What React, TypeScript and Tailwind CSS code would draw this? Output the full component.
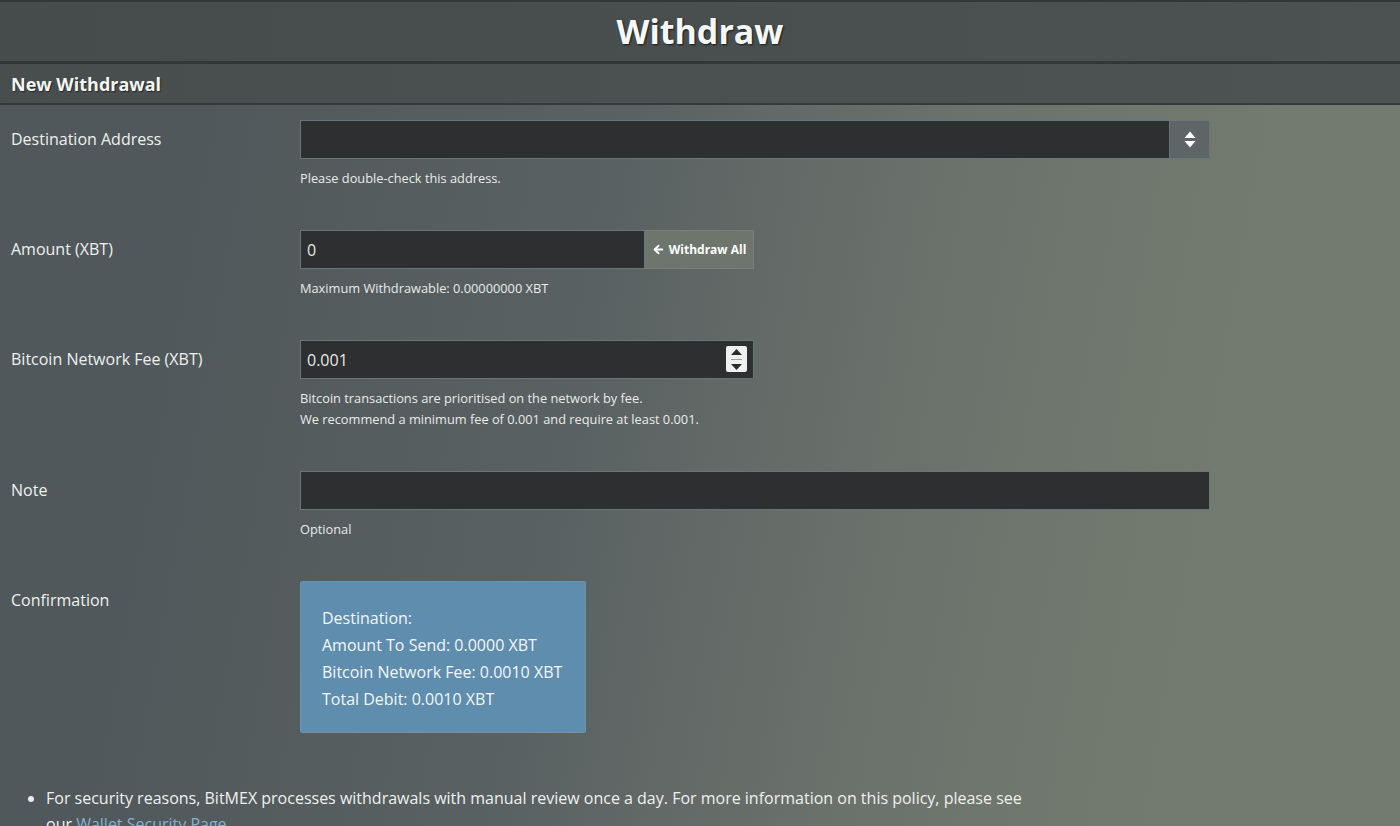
import { ArrowLeft } from 'lucide-react'

function SortIcon() {
  return (
    <svg width="12" height="17" viewBox="0 0 12 17" className="fill-white">
      <path d="M6 0.5 L11.5 7 H0.5 Z" />
      <path d="M6 16.5 L11.5 10 H0.5 Z" />
    </svg>
  )
}

function Spinner() {
  return (
    <div className="absolute right-[6px] top-[5px] flex h-[26px] w-[21px] flex-col items-center justify-center gap-[4px] rounded-[2px] bg-[#eef1ef]">
      <svg width="11" height="6" viewBox="0 0 11 6" className="fill-[#2a2d2d]">
        <path d="M5.5 0 L11 6 H0 Z" />
      </svg>
      <div className="h-px w-[11px] bg-[#9aa09c]" />
      <svg width="11" height="6" viewBox="0 0 11 6" className="fill-[#2a2d2d]">
        <path d="M5.5 6 L11 0 H0 Z" />
      </svg>
    </div>
  )
}

const inputCls =
  'h-[39px] bg-[#2e2f30] border border-[#66777c] text-[16px] text-[#e6e8e6] px-[6px] flex items-center'

function Row({ label, children, gap = true }: { label: string; children: React.ReactNode; gap?: boolean }) {
  return (
    <div className={`flex ${gap ? 'mb-[41px]' : ''}`}>
      <div className="w-[300px] shrink-0 pl-[11px] text-[16px] leading-[39px] text-[#eef0ee]">{label}</div>
      <div className="flex-1">{children}</div>
    </div>
  )
}

function Help({ children }: { children: React.ReactNode }) {
  return <div className="mt-[9px] text-[12.8px] leading-[21px] text-[#e8ebe8]">{children}</div>
}

export default function App() {
  return (
    <div
      className="min-h-[826px] w-full overflow-hidden bg-[linear-gradient(100deg,#50585b_14%,#5a6162_42%,#6a716b_62%,#737b70_84%)] text-white"
      style={{ fontFamily: '"Open Sans", "Noto Sans", sans-serif' }}
    >
      {/* title */}
      <div className="border-t-2 border-b-[3px] border-[#333737] bg-[linear-gradient(90deg,#464b4b,#4c5252)]">
        <h1 className="h-[59px] text-center text-[34px] font-bold leading-[58px] text-[#f4f8f8] [text-shadow:1px_1px_2px_rgba(0,0,0,0.7)]">
          Withdraw
        </h1>
      </div>
      <div className="border-b-2 border-[#363a3a] bg-[linear-gradient(90deg,#484d4d,#4d5353)]">
        <h2 className="h-[39px] pl-[11px] text-[18px] font-bold leading-[40px] text-[#f2f6f6] [text-shadow:1px_1px_1px_rgba(0,0,0,0.5)]">
          New Withdrawal
        </h2>
      </div>

      <div className="pt-[15px]">
        <Row label="Destination Address">
          <div className="flex w-[910px]">
            <div className={`${inputCls} flex-1`} />
            <div className="flex h-[39px] w-[40px] items-center justify-center border border-l-0 border-[#66777c] bg-[#5d6566]">
              <SortIcon />
            </div>
          </div>
          <Help>Please double-check this address.</Help>
        </Row>

        <Row label="Amount (XBT)">
          <div className="flex w-[454px]">
            <div className={`${inputCls} flex-1`}>0</div>
            <div className="flex h-[39px] w-[109px] items-center justify-center gap-[4px] border border-l-0 border-[#76807a] bg-[#6d756c] text-[12px] font-bold text-white">
              <ArrowLeft size={13} strokeWidth={3.5} />
              Withdraw All
            </div>
          </div>
          <Help>Maximum Withdrawable: 0.00000000 XBT</Help>
        </Row>

        <Row label="Bitcoin Network Fee (XBT)">
          <div className={`${inputCls} relative w-[454px]`}>
            0.001
            <Spinner />
          </div>
          <Help>
            Bitcoin transactions are prioritised on the network by fee.
            <br />
            We recommend a minimum fee of 0.001 and require at least 0.001.
          </Help>
        </Row>

        <Row label="Note">
          <div className={`${inputCls} w-[910px]`} />
          <Help>Optional</Help>
        </Row>

        <Row label="Confirmation" gap={false}>
          <div className="h-[152px] w-[286px] rounded-[2px] border border-[#6893b1] bg-[#5f8dad] pl-[21px] pt-[23px] text-[16px] leading-[27px] text-[#f2f6f8]">
            <div>Destination:</div>
            <div>Amount To Send: 0.0000 XBT</div>
            <div>Bitcoin Network Fee: 0.0010 XBT</div>
            <div>Total Debit: 0.0010 XBT</div>
          </div>
        </Row>

        <ul className="mt-[52px] max-w-[1040px] list-disc pl-[46px] text-[16px] leading-[26px] text-[#eef0ee] marker:text-[#e8ecec]">
          <li>
            For security reasons, BitMEX processes withdrawals with manual review once a day. For more information on this policy, please see
            our <span className="text-[#82b2d4]">Wallet Security Page</span>.
          </li>
        </ul>
      </div>
    </div>
  )
}
